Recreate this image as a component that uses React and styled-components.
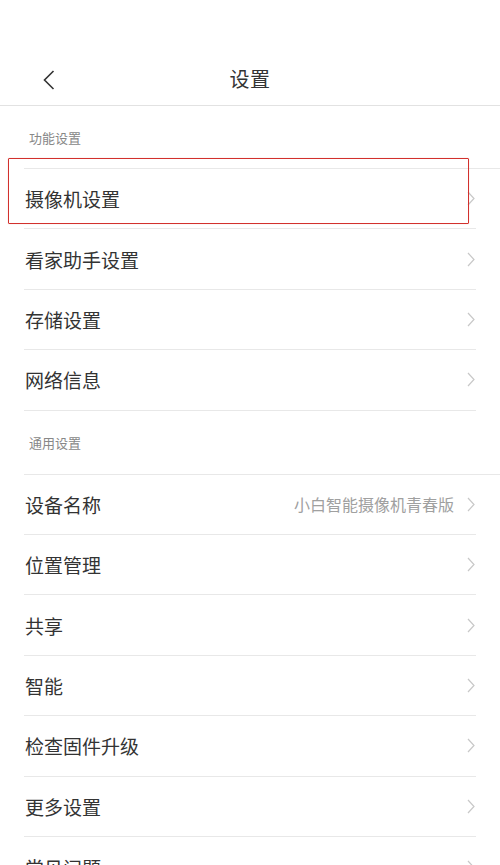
import React from 'react';
import styled, { createGlobalStyle } from 'styled-components';

const GlobalStyle = createGlobalStyle`
  html, body {
    margin: 0;
    padding: 0;
    background: #ffffff;
  }
  body {
    font-family: "Noto Sans CJK SC", "Noto Sans", sans-serif;
    color: #333333;
  }
`;

const Page = styled.div`
  position: relative;
  width: 500px;
  height: 865px;
  overflow: hidden;
  background: #ffffff;
`;

const StatusBar = styled.div`
  height: 48px;
`;

const Header = styled.div`
  height: 58px;
  box-sizing: border-box;
  padding-top: 4px;
  display: flex;
  align-items: center;
  justify-content: center;
  position: relative;
  border-bottom: 1px solid #e2e2e2;
`;

const Back = styled.div`
  position: absolute;
  left: 40px;
  top: 20px;
  width: 18px;
  height: 24px;
  display: flex;
  align-items: center;
  justify-content: center;
`;

const Title = styled.div`
  font-size: 20px;
  font-weight: 400;
  color: #333333;
  letter-spacing: 0.5px;
`;

const SectionHeader = styled.div`
  height: ${p => p.$height}px;
  box-sizing: border-box;
  margin-left: 24px;
  padding-left: 5px;
  display: flex;
  align-items: center;
  font-size: 13px;
  color: #888888;
  border-bottom: 1px solid #e8e8e8;
`;

const Row = styled.div`
  height: 60.4px;
  box-sizing: border-box;
  margin: 0 24px;
  display: flex;
  align-items: center;
  justify-content: space-between;
  border-bottom: ${p => (p.$last ? 'none' : '1px solid #e8e8e8')};
`;

const Label = styled.span`
  padding-left: 1px;
  font-size: 19px;
  color: #333333;
`;

const Right = styled.div`
  display: flex;
  align-items: center;
  gap: 13px;
  padding-right: 1px;
`;

const Value = styled.span`
  font-size: 16px;
  color: #a0a0a0;
`;

const Highlight = styled.div`
  position: absolute;
  left: 8px;
  top: 158px;
  width: 461px;
  height: 66px;
  box-sizing: border-box;
  border: 1.5px solid #d2312d;
  border-radius: 1px;
  box-shadow: 0 0 1px rgba(210, 49, 45, 0.4);
  pointer-events: none;
`;

const Chevron = () => (
  <svg width="8" height="15" viewBox="0 0 8 15">
    <path d="M1 1 L7 7.5 L1 14" fill="none" stroke="#c8c8c8" strokeWidth="1.2" />
  </svg>
);

const BackIcon = () => (
  <svg width="12" height="20" viewBox="0 0 12 20">
    <path d="M10.5 1 L1.5 10 L10.5 19" fill="none" stroke="#333" strokeWidth="1.6" />
  </svg>
);

const functionItems = ['摄像机设置', '看家助手设置', '存储设置', '网络信息'];
const generalItems = [
  { label: '设备名称', value: '小白智能摄像机青春版' },
  { label: '位置管理' },
  { label: '共享' },
  { label: '智能' },
  { label: '检查固件升级' },
  { label: '更多设置' },
  { label: '常见问题' },
];

const App = () => (
  <>
    <GlobalStyle />
    <Page>
      <StatusBar />
      <Header>
        <Back>
          <BackIcon />
        </Back>
        <Title>设置</Title>
      </Header>

      <SectionHeader $height={63}>功能设置</SectionHeader>
      {functionItems.map(item => (
        <Row key={item}>
          <Label>{item}</Label>
          <Right>
            <Chevron />
          </Right>
        </Row>
      ))}

      <SectionHeader $height={64}>通用设置</SectionHeader>
      {generalItems.map((item, i) => (
        <Row key={item.label} $last={i === generalItems.length - 1}>
          <Label>{item.label}</Label>
          <Right>
            {item.value && <Value>{item.value}</Value>}
            <Chevron />
          </Right>
        </Row>
      ))}

      <Highlight />
    </Page>
  </>
);

export default App;
